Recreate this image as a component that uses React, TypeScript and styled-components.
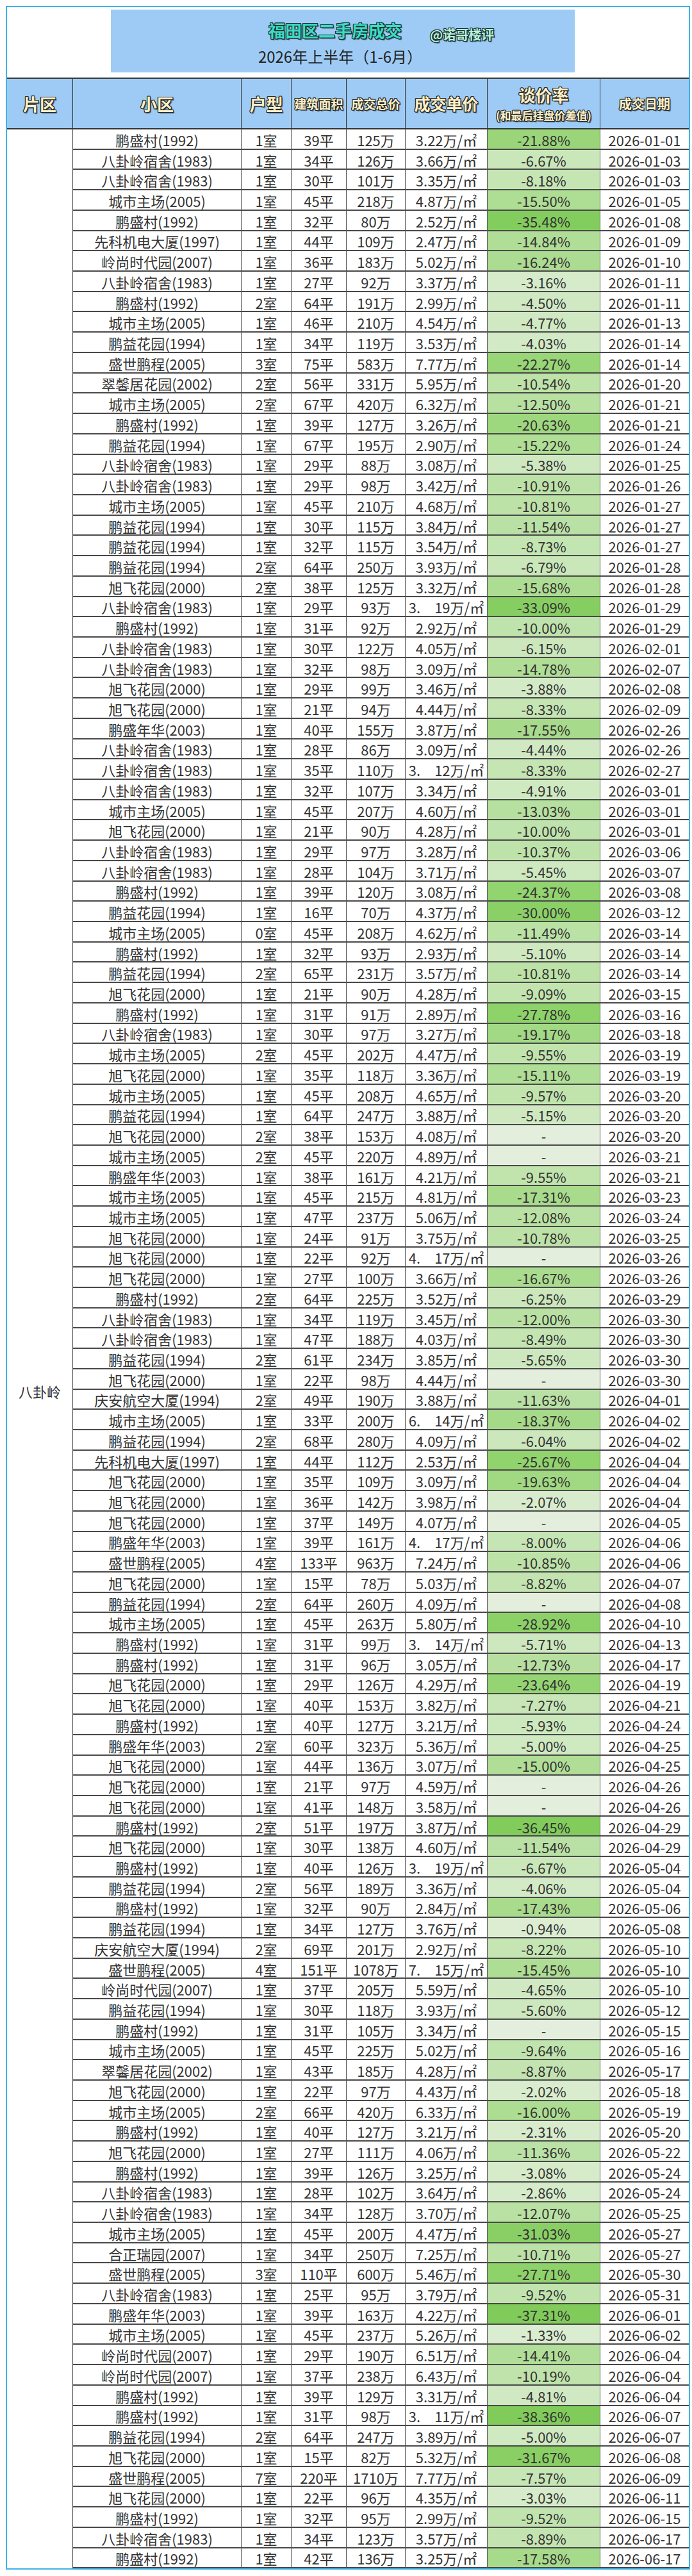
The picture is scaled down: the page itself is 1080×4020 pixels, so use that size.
import React from "react";
import styled, { createGlobalStyle } from "styled-components";

type Row = [string, string, string, string, string, number | null, string];

const rows: Row[] = [
  ["鹏盛村(1992)", "1室", "39平", "125万", "3.22", -21.88, "01-01"],
  ["八卦岭宿舍(1983)", "1室", "34平", "126万", "3.66", -6.67, "01-03"],
  ["八卦岭宿舍(1983)", "1室", "30平", "101万", "3.35", -8.18, "01-03"],
  ["城市主场(2005)", "1室", "45平", "218万", "4.87", -15.5, "01-05"],
  ["鹏盛村(1992)", "1室", "32平", "80万", "2.52", -35.48, "01-08"],
  ["先科机电大厦(1997)", "1室", "44平", "109万", "2.47", -14.84, "01-09"],
  ["岭尚时代园(2007)", "1室", "36平", "183万", "5.02", -16.24, "01-10"],
  ["八卦岭宿舍(1983)", "1室", "27平", "92万", "3.37", -3.16, "01-11"],
  ["鹏盛村(1992)", "2室", "64平", "191万", "2.99", -4.5, "01-11"],
  ["城市主场(2005)", "1室", "46平", "210万", "4.54", -4.77, "01-13"],
  ["鹏益花园(1994)", "1室", "34平", "119万", "3.53", -4.03, "01-14"],
  ["盛世鹏程(2005)", "3室", "75平", "583万", "7.77", -22.27, "01-14"],
  ["翠馨居花园(2002)", "2室", "56平", "331万", "5.95", -10.54, "01-20"],
  ["城市主场(2005)", "2室", "67平", "420万", "6.32", -12.5, "01-21"],
  ["鹏盛村(1992)", "1室", "39平", "127万", "3.26", -20.63, "01-21"],
  ["鹏益花园(1994)", "1室", "67平", "195万", "2.90", -15.22, "01-24"],
  ["八卦岭宿舍(1983)", "1室", "29平", "88万", "3.08", -5.38, "01-25"],
  ["八卦岭宿舍(1983)", "1室", "29平", "98万", "3.42", -10.91, "01-26"],
  ["城市主场(2005)", "1室", "45平", "210万", "4.68", -10.81, "01-27"],
  ["鹏益花园(1994)", "1室", "30平", "115万", "3.84", -11.54, "01-27"],
  ["鹏益花园(1994)", "1室", "32平", "115万", "3.54", -8.73, "01-27"],
  ["鹏益花园(1994)", "2室", "64平", "250万", "3.93", -6.79, "01-28"],
  ["旭飞花园(2000)", "2室", "38平", "125万", "3.32", -15.68, "01-28"],
  ["八卦岭宿舍(1983)", "1室", "29平", "93万", "3.　19", -33.09, "01-29"],
  ["鹏盛村(1992)", "1室", "31平", "92万", "2.92", -10.0, "01-29"],
  ["八卦岭宿舍(1983)", "1室", "30平", "122万", "4.05", -6.15, "02-01"],
  ["八卦岭宿舍(1983)", "1室", "32平", "98万", "3.09", -14.78, "02-07"],
  ["旭飞花园(2000)", "1室", "29平", "99万", "3.46", -3.88, "02-08"],
  ["旭飞花园(2000)", "1室", "21平", "94万", "4.44", -8.33, "02-09"],
  ["鹏盛年华(2003)", "1室", "40平", "155万", "3.87", -17.55, "02-26"],
  ["八卦岭宿舍(1983)", "1室", "28平", "86万", "3.09", -4.44, "02-26"],
  ["八卦岭宿舍(1983)", "1室", "35平", "110万", "3.　12", -8.33, "02-27"],
  ["八卦岭宿舍(1983)", "1室", "32平", "107万", "3.34", -4.91, "03-01"],
  ["城市主场(2005)", "1室", "45平", "207万", "4.60", -13.03, "03-01"],
  ["旭飞花园(2000)", "1室", "21平", "90万", "4.28", -10.0, "03-01"],
  ["八卦岭宿舍(1983)", "1室", "29平", "97万", "3.28", -10.37, "03-06"],
  ["八卦岭宿舍(1983)", "1室", "28平", "104万", "3.71", -5.45, "03-07"],
  ["鹏盛村(1992)", "1室", "39平", "120万", "3.08", -24.37, "03-08"],
  ["鹏益花园(1994)", "1室", "16平", "70万", "4.37", -30.0, "03-12"],
  ["城市主场(2005)", "0室", "45平", "208万", "4.62", -11.49, "03-14"],
  ["鹏盛村(1992)", "1室", "32平", "93万", "2.93", -5.1, "03-14"],
  ["鹏益花园(1994)", "2室", "65平", "231万", "3.57", -10.81, "03-14"],
  ["旭飞花园(2000)", "1室", "21平", "90万", "4.28", -9.09, "03-15"],
  ["鹏盛村(1992)", "1室", "31平", "91万", "2.89", -27.78, "03-16"],
  ["八卦岭宿舍(1983)", "1室", "30平", "97万", "3.27", -19.17, "03-18"],
  ["城市主场(2005)", "2室", "45平", "202万", "4.47", -9.55, "03-19"],
  ["旭飞花园(2000)", "1室", "35平", "118万", "3.36", -15.11, "03-19"],
  ["城市主场(2005)", "1室", "45平", "208万", "4.65", -9.57, "03-20"],
  ["鹏益花园(1994)", "1室", "64平", "247万", "3.88", -5.15, "03-20"],
  ["旭飞花园(2000)", "2室", "38平", "153万", "4.08", null, "03-20"],
  ["城市主场(2005)", "2室", "45平", "220万", "4.89", null, "03-21"],
  ["鹏盛年华(2003)", "1室", "38平", "161万", "4.21", -9.55, "03-21"],
  ["城市主场(2005)", "1室", "45平", "215万", "4.81", -17.31, "03-23"],
  ["城市主场(2005)", "1室", "47平", "237万", "5.06", -12.08, "03-24"],
  ["旭飞花园(2000)", "1室", "24平", "91万", "3.75", -10.78, "03-25"],
  ["旭飞花园(2000)", "1室", "22平", "92万", "4.　17", null, "03-26"],
  ["旭飞花园(2000)", "1室", "27平", "100万", "3.66", -16.67, "03-26"],
  ["鹏盛村(1992)", "2室", "64平", "225万", "3.52", -6.25, "03-29"],
  ["八卦岭宿舍(1983)", "1室", "34平", "119万", "3.45", -12.0, "03-30"],
  ["八卦岭宿舍(1983)", "1室", "47平", "188万", "4.03", -8.49, "03-30"],
  ["鹏益花园(1994)", "2室", "61平", "234万", "3.85", -5.65, "03-30"],
  ["旭飞花园(2000)", "1室", "22平", "98万", "4.44", null, "03-30"],
  ["庆安航空大厦(1994)", "2室", "49平", "190万", "3.88", -11.63, "04-01"],
  ["城市主场(2005)", "1室", "33平", "200万", "6.　14", -18.37, "04-02"],
  ["鹏益花园(1994)", "2室", "68平", "280万", "4.09", -6.04, "04-02"],
  ["先科机电大厦(1997)", "1室", "44平", "112万", "2.53", -25.67, "04-04"],
  ["旭飞花园(2000)", "1室", "35平", "109万", "3.09", -19.63, "04-04"],
  ["旭飞花园(2000)", "1室", "36平", "142万", "3.98", -2.07, "04-04"],
  ["旭飞花园(2000)", "1室", "37平", "149万", "4.07", null, "04-05"],
  ["鹏盛年华(2003)", "1室", "39平", "161万", "4.　17", -8.0, "04-06"],
  ["盛世鹏程(2005)", "4室", "133平", "963万", "7.24", -10.85, "04-06"],
  ["旭飞花园(2000)", "1室", "15平", "78万", "5.03", -8.82, "04-07"],
  ["鹏益花园(1994)", "2室", "64平", "260万", "4.09", null, "04-08"],
  ["城市主场(2005)", "1室", "45平", "263万", "5.80", -28.92, "04-10"],
  ["鹏盛村(1992)", "1室", "31平", "99万", "3.　14", -5.71, "04-13"],
  ["鹏盛村(1992)", "1室", "31平", "96万", "3.05", -12.73, "04-17"],
  ["旭飞花园(2000)", "1室", "29平", "126万", "4.29", -23.64, "04-19"],
  ["旭飞花园(2000)", "1室", "40平", "153万", "3.82", -7.27, "04-21"],
  ["鹏盛村(1992)", "1室", "40平", "127万", "3.21", -5.93, "04-24"],
  ["鹏盛年华(2003)", "2室", "60平", "323万", "5.36", -5.0, "04-25"],
  ["旭飞花园(2000)", "1室", "44平", "136万", "3.07", -15.0, "04-25"],
  ["旭飞花园(2000)", "1室", "21平", "97万", "4.59", null, "04-26"],
  ["旭飞花园(2000)", "1室", "41平", "148万", "3.58", null, "04-26"],
  ["鹏盛村(1992)", "2室", "51平", "197万", "3.87", -36.45, "04-29"],
  ["旭飞花园(2000)", "1室", "30平", "138万", "4.60", -11.54, "04-29"],
  ["鹏盛村(1992)", "1室", "40平", "126万", "3.　19", -6.67, "05-04"],
  ["鹏益花园(1994)", "2室", "56平", "189万", "3.36", -4.06, "05-04"],
  ["鹏盛村(1992)", "1室", "32平", "90万", "2.84", -17.43, "05-06"],
  ["鹏益花园(1994)", "1室", "34平", "127万", "3.76", -0.94, "05-08"],
  ["庆安航空大厦(1994)", "2室", "69平", "201万", "2.92", -8.22, "05-10"],
  ["盛世鹏程(2005)", "4室", "151平", "1078万", "7.　15", -15.45, "05-10"],
  ["岭尚时代园(2007)", "1室", "37平", "205万", "5.59", -4.65, "05-10"],
  ["鹏益花园(1994)", "1室", "30平", "118万", "3.93", -5.6, "05-12"],
  ["鹏盛村(1992)", "1室", "31平", "105万", "3.34", null, "05-15"],
  ["城市主场(2005)", "1室", "45平", "225万", "5.02", -9.64, "05-16"],
  ["翠馨居花园(2002)", "1室", "43平", "185万", "4.28", -8.87, "05-17"],
  ["旭飞花园(2000)", "1室", "22平", "97万", "4.43", -2.02, "05-18"],
  ["城市主场(2005)", "2室", "66平", "420万", "6.33", -16.0, "05-19"],
  ["鹏盛村(1992)", "1室", "40平", "127万", "3.21", -2.31, "05-20"],
  ["旭飞花园(2000)", "1室", "27平", "111万", "4.06", -11.36, "05-22"],
  ["鹏盛村(1992)", "1室", "39平", "126万", "3.25", -3.08, "05-24"],
  ["八卦岭宿舍(1983)", "1室", "28平", "102万", "3.64", -2.86, "05-24"],
  ["八卦岭宿舍(1983)", "1室", "34平", "128万", "3.70", -12.07, "05-25"],
  ["城市主场(2005)", "1室", "45平", "200万", "4.47", -31.03, "05-27"],
  ["合正瑞园(2007)", "1室", "34平", "250万", "7.25", -10.71, "05-27"],
  ["盛世鹏程(2005)", "3室", "110平", "600万", "5.46", -27.71, "05-30"],
  ["八卦岭宿舍(1983)", "1室", "25平", "95万", "3.79", -9.52, "05-31"],
  ["鹏盛年华(2003)", "1室", "39平", "163万", "4.22", -37.31, "06-01"],
  ["城市主场(2005)", "1室", "45平", "237万", "5.26", -1.33, "06-02"],
  ["岭尚时代园(2007)", "1室", "29平", "190万", "6.51", -14.41, "06-04"],
  ["岭尚时代园(2007)", "1室", "37平", "238万", "6.43", -10.19, "06-04"],
  ["鹏盛村(1992)", "1室", "39平", "129万", "3.31", -4.81, "06-04"],
  ["鹏盛村(1992)", "1室", "31平", "98万", "3.　11", -38.36, "06-07"],
  ["鹏益花园(1994)", "2室", "64平", "247万", "3.89", -5.0, "06-07"],
  ["旭飞花园(2000)", "1室", "15平", "82万", "5.32", -31.67, "06-08"],
  ["盛世鹏程(2005)", "7室", "220平", "1710万", "7.77", -7.57, "06-09"],
  ["旭飞花园(2000)", "1室", "22平", "96万", "4.35", -3.03, "06-11"],
  ["鹏盛村(1992)", "1室", "32平", "95万", "2.99", -9.52, "06-15"],
  ["八卦岭宿舍(1983)", "1室", "34平", "123万", "3.57", -8.89, "06-17"],
  ["鹏盛村(1992)", "1室", "42平", "136万", "3.25", -17.58, "06-17"],
];

// green colour scale, like the sheet's conditional formatting
const mix = (a: number[], b: number[], t: number) =>
  `rgb(${a.map((v, i) => Math.round(v + (b[i] - v) * t)).join(",")})`;

const rateBg = (r: number | null) => {
  if (r === null) return "#e4eedd";
  const v = Math.abs(r);
  const light = [223, 238, 214];
  const mid = [147, 212, 112];
  const dark = [128, 203, 90];
  if (v <= 24) return mix(light, mid, v / 24);
  return mix(mid, dark, Math.min(1, (v - 24) / 14));
};

const GlobalStyle = createGlobalStyle`
  body {
    margin: 0;
    background: #fff;
    font-family: "Noto Sans CJK SC", "Noto Sans", sans-serif;
    color: #2b2b2b;
  }
`;

const Frame = styled.div`
  box-sizing: border-box;
  width: 1068px;
  margin: 9px 0 0 9px;
  border: 2px solid #3db3e8;
  background: #fff;
`;

const TitleArea = styled.div`
  height: 106px;
  padding: 4px 0 0 162px;
  border-bottom: 2px solid #3a3a3a;
`;

const TitleBox = styled.div`
  box-sizing: border-box;
  width: 724px;
  height: 98px;
  padding-top: 15px;
  background: #9ecbf5;
`;

const TitleLine = styled.div`
  display: flex;
  align-items: flex-start;
  gap: 44px;
  height: 34px;
  margin-left: 246px;
`;

const outline = (c: string) =>
  `-1px -1px 0 ${c}, 1px -1px 0 ${c}, -1px 1px 0 ${c}, 1px 1px 0 ${c},
   0 -1px 0 ${c}, 0 1px 0 ${c}, -1px 0 0 ${c}, 1px 0 0 ${c}, 2px 2px 1px rgba(0,0,0,0.55)`;

const MainTitle = styled.div`
  font-size: 26px;
  line-height: 34px;
  font-weight: 700;
  color: #3bdcc6;
  text-shadow: ${outline("#16302e")};
  white-space: nowrap;
`;

const Handle = styled.div`
  padding-top: 7px;
  font-size: 20px;
  line-height: 34px;
  font-weight: 700;
  color: #b9f2dc;
  text-shadow: ${outline("#16302e")};
  white-space: nowrap;
`;

const SubTitle = styled.div`
  margin-top: 8px;
  padding-right: 8px;
  font-size: 24px;
  line-height: 32px;
  text-align: center;
  color: #222;
`;

const Grid = styled.div`
  display: grid;
  grid-template-columns: 103px 263px 78px 86px 92px 128px 176px 138px;
  grid-template-rows: 79px repeat(${rows.length}, 31.72px);
`;

const HeadCell = styled.div<{ $last?: boolean }>`
  box-sizing: border-box;
  display: flex;
  flex-direction: column;
  align-items: center;
  justify-content: center;
  gap: 10px;
  background: #9ecbf5;
  border-right: ${({ $last }) => ($last ? "none" : "1px solid #333")};
  border-bottom: 2px solid #333;
`;

const HeadText = styled.span<{ $size: number }>`
  font-size: ${({ $size }) => $size}px;
  line-height: 1;
  font-weight: 700;
  color: #fdf0c8;
  text-shadow: ${outline("#262626")};
  white-space: nowrap;
`;

const AreaCell = styled.div`
  box-sizing: border-box;
  grid-column: 1;
  grid-row: 2 / span ${rows.length};
  display: flex;
  align-items: center;
  justify-content: center;
  padding-top: 132px;
  border-right: 1px solid #555;
  font-size: 22px;
  color: #333;
`;

const Cell = styled.div<{ $bg?: string; $last?: boolean }>`
  box-sizing: border-box;
  display: flex;
  align-items: center;
  justify-content: center;
  padding-top: 2px;
  background: ${({ $bg }) => $bg || "#fff"};
  border-right: ${({ $last }) => ($last ? "none" : "1px solid #555")};
  border-bottom: 2px solid #484848;
  font-size: 22px;
  line-height: 1;
  color: #333;
  white-space: nowrap;
`;

const App = () => (
  <>
    <GlobalStyle />
    <Frame>
      <TitleArea>
        <TitleBox>
          <TitleLine>
            <MainTitle>福田区二手房成交</MainTitle>
            <Handle>@诺哥楼评</Handle>
          </TitleLine>
          <SubTitle>2026年上半年（1-6月）</SubTitle>
        </TitleBox>
      </TitleArea>
      <Grid>
        <HeadCell>
          <HeadText $size={26}>片区</HeadText>
        </HeadCell>
        <HeadCell>
          <HeadText $size={26}>小区</HeadText>
        </HeadCell>
        <HeadCell>
          <HeadText $size={26}>户型</HeadText>
        </HeadCell>
        <HeadCell>
          <HeadText $size={19}>建筑面积</HeadText>
        </HeadCell>
        <HeadCell>
          <HeadText $size={19}>成交总价</HeadText>
        </HeadCell>
        <HeadCell>
          <HeadText $size={25}>成交单价</HeadText>
        </HeadCell>
        <HeadCell>
          <HeadText $size={26}>谈价率</HeadText>
          <HeadText $size={17}>(和最后挂盘价差值)</HeadText>
        </HeadCell>
        <HeadCell $last>
          <HeadText $size={20}>成交日期</HeadText>
        </HeadCell>
        <AreaCell>八卦岭</AreaCell>
        {rows.map(([name, type, area, total, unit, rate, date], i) => (
          <React.Fragment key={i}>
            <Cell>{name}</Cell>
            <Cell>{type}</Cell>
            <Cell>{area}</Cell>
            <Cell>{total}</Cell>
            <Cell>{unit}万/㎡</Cell>
            <Cell $bg={rateBg(rate)}>
              {rate === null ? "-" : `${rate.toFixed(2)}%`}
            </Cell>
            <Cell $last>2026-{date}</Cell>
          </React.Fragment>
        ))}
      </Grid>
    </Frame>
  </>
);

export default App;
